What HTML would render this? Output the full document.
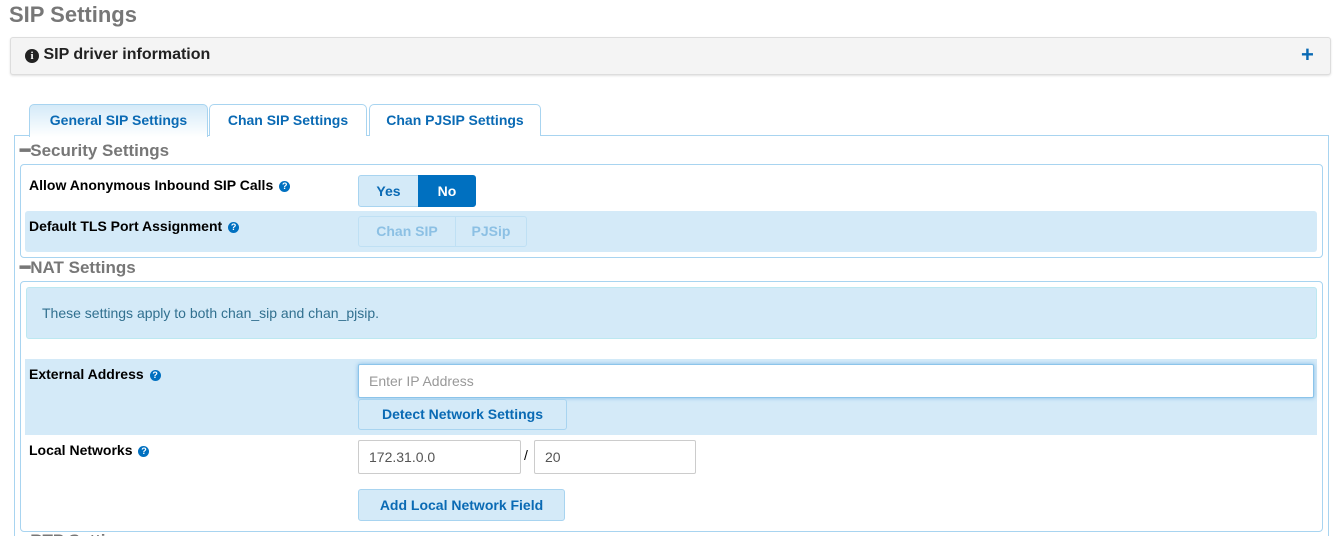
<!DOCTYPE html>
<html><head><meta charset="utf-8"><style>
*{box-sizing:border-box;margin:0;padding:0}
html,body{width:1335px;height:536px;overflow:hidden}
body{background:#fff;font-family:"Liberation Sans",sans-serif;position:relative;color:#000}
.a{position:absolute}
.t{font-weight:bold;white-space:nowrap}
.q{display:inline-block;width:11px;height:11px;border-radius:50%;background:#0070c0;color:#fff;font-size:9px;line-height:11px;text-align:center;font-weight:bold;vertical-align:1px;margin-left:6px}
.tab{position:absolute;top:104px;height:32px;border:1px solid #a8d4f0;border-bottom:none;border-radius:5px 5px 0 0;background:#fff;color:#0a6ab4;font-weight:bold;font-size:14px;text-align:center;line-height:31px}
.btn{position:absolute;border:1px solid #a8d4f0;background:#d4eaf8;color:#0a6ab4;font-weight:bold;font-size:14px;text-align:center;border-radius:3px}
.inp{position:absolute;background:#fff;border:1px solid #ccc;font-size:14px;color:#555;padding-left:10px;border-radius:2px}
.h{font-size:17px;color:#777;font-weight:bold}
</style></head><body>
<div class="a t" style="left:9px;top:2px;font-size:22px;color:#777">SIP Settings</div>
<div class="a" style="left:10px;top:37px;width:1321px;height:38px;background:#f4f4f4;border:1px solid #ddd;border-radius:3px;box-shadow:0 1px 2px rgba(0,0,0,.12)"></div>
<div class="a t" style="left:25px;top:46px;font-size:16px;color:#222"><span style="display:inline-block;width:14px;height:14px;border-radius:50%;background:#222;color:#fff;font-size:11px;line-height:14px;text-align:center;vertical-align:0px;font-family:'Liberation Serif',serif">i</span> SIP driver information</div>
<div class="a t" style="left:1301px;top:42px;font-size:22px;color:#0a6ab4">+</div>

<div class="a" style="left:14px;top:135px;width:1315px;height:410px;border:1px solid #a8d4f0"></div>
<div class="tab" style="left:29px;width:179px;background:linear-gradient(#d4eaf8,#fff);height:33px">General SIP Settings</div>
<div class="tab" style="left:209px;width:158px">Chan SIP Settings</div>
<div class="tab" style="left:369px;width:172px">Chan PJSIP Settings</div>

<div class="a h" style="left:20px;top:141px">━Security Settings</div>
<div class="a" style="left:20px;top:164px;width:1303px;height:94px;border:1px solid #a8d4f0;border-radius:4px"></div>
<div class="a t" style="left:29px;top:177px;font-size:14px">Allow Anonymous Inbound SIP Calls<span class="q">?</span></div>
<div class="btn" style="left:358px;top:175px;width:61px;height:32px;line-height:30px;border-radius:3px 0 0 3px">Yes</div>
<div class="btn" style="left:418px;top:175px;width:58px;height:32px;line-height:30px;background:#0070c0;border-color:#0070c0;color:#fff;border-radius:0 3px 3px 0">No</div>
<div class="a" style="left:25px;top:211px;width:1292px;height:41px;background:#d4eaf8;border-radius:3px"></div>
<div class="a t" style="left:29px;top:218px;font-size:14px">Default TLS Port Assignment<span class="q">?</span></div>
<div class="btn" style="left:358px;top:216px;width:98px;height:31px;line-height:29px;color:#8cc0e4;border-color:#bfe0f4;border-radius:3px 0 0 3px">Chan SIP</div>
<div class="btn" style="left:455px;top:216px;width:72px;height:31px;line-height:29px;color:#8cc0e4;border-color:#bfe0f4;border-radius:0 3px 3px 0">PJSip</div>

<div class="a h" style="left:20px;top:258px">━NAT Settings</div>
<div class="a" style="left:20px;top:281px;width:1303px;height:251px;border:1px solid #a8d4f0;border-radius:4px"></div>
<div class="a" style="left:26px;top:287px;width:1291px;height:52px;background:#d4eaf8;border:1px solid #bce8f1;border-radius:3px"></div>
<div class="a" style="left:42px;top:305px;font-size:14px;color:#31708f">These settings apply to both chan_sip and chan_pjsip.</div>
<div class="a" style="left:25px;top:359px;width:1292px;height:76px;background:#d4eaf8"></div>
<div class="a t" style="left:29px;top:366px;font-size:14px">External Address<span class="q">?</span></div>
<div class="inp" style="left:358px;top:364px;width:956px;height:34px;line-height:32px;color:#999;border-color:#8cc4ea;box-shadow:0 0 4px rgba(80,160,220,.6)">Enter IP Address</div>
<div class="btn" style="left:358px;top:399px;width:209px;height:31px;line-height:29px">Detect Network Settings</div>
<div class="a t" style="left:29px;top:442px;font-size:14px">Local Networks<span class="q">?</span></div>
<div class="inp" style="left:358px;top:440px;width:163px;height:34px;line-height:32px">172.31.0.0</div>
<div class="a" style="left:524px;top:447px;font-size:14px">/</div>
<div class="inp" style="left:534px;top:440px;width:162px;height:34px;line-height:32px">20</div>
<div class="btn" style="left:358px;top:489px;width:207px;height:32px;line-height:30px">Add Local Network Field</div>
<div class="a h" style="left:20px;top:531px">━RTP Settings</div>
</body></html>
